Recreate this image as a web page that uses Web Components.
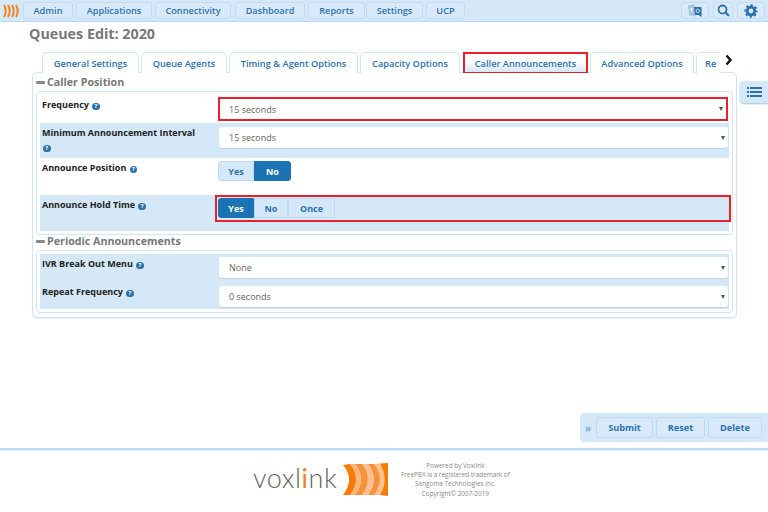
<!DOCTYPE html>
<html><head><meta charset="utf-8"><style>
html,body{margin:0;padding:0;background:#fff}
body{width:768px;height:512px;overflow:hidden;position:relative;font-family:"Open Sans",sans-serif;color:#333}
</style></head><body>
<x-topbar>
  <x-nav style="width:50px">Admin</x-nav><x-nav style="width:76px">Applications</x-nav><x-nav style="width:76px;margin-right:1px">Connectivity</x-nav><x-nav style="width:70px">Dashboard</x-nav><x-nav style="width:57px;margin-right:-2px">Reports</x-nav><x-nav style="width:57px">Settings</x-nav><x-nav style="width:39px">UCP</x-nav>
</x-topbar>
<x-page>
  <x-title>Queues Edit: 2020</x-title>
  <x-tabs>
    <x-tab style="width:97px">General Settings</x-tab>
    <x-tab style="width:86px">Queue Agents</x-tab>
    <x-tab style="width:129px">Timing &amp; Agent Options</x-tab>
    <x-tab style="width:100px">Capacity Options</x-tab>
    <x-tab active style="width:125px;margin-left:1px">Caller Announcements</x-tab>
    <x-tab style="width:104px">Advanced Options</x-tab>
    <x-tab clip style="width:30px">Re</x-tab>
  </x-tabs>
  <x-panel>
    <x-section heading="Caller Position" hh="18" style="height:162px">
      <x-row h="28"><span slot="label">Frequency <x-help></x-help></span><x-select mark top="2">15 seconds</x-select></x-row>
      <x-row h="35" blue><span slot="label">Minimum Announcement Interval<br><x-help style="margin:6px 0 0 1px"></x-help></span><x-select top="4">15 seconds</x-select></x-row>
      <x-row h="37"><span slot="label">Announce Position <x-help></x-help></span><x-radio top="3" on="1" widths="36,37"><span>Yes</span><span>No</span></x-radio></x-row>
      <x-row h="36" blue><span slot="label">Announce Hold Time <x-help></x-help></span><x-radio mark top="3" on="0" widths="36,34,47"><span>Yes</span><span>No</span><span>Once</span></x-radio></x-row>
    </x-section>
    <x-section heading="Periodic Announcements" hh="15" lift style="height:77px">
      <x-row h="28" blue><span slot="label">IVR Break Out Menu <x-help></x-help></span><x-select top="3">None</x-select></x-row>
      <x-row h="27" blue><span slot="label">Repeat Frequency <x-help></x-help></span><x-select top="4">0 seconds</x-select></x-row>
    </x-section>
  </x-panel>
</x-page>
<x-sidetab></x-sidetab>
<x-actionbar><x-act style="width:57px">Submit</x-act><x-act style="width:49px">Reset</x-act><x-act style="width:54px">Delete</x-act></x-actionbar>
<x-footer></x-footer>
<script>
function def(name,html,init){
  customElements.define(name,class extends HTMLElement{
    constructor(){super();this.attachShadow({mode:'open'}).innerHTML=html;}
    connectedCallback(){init&&init.call(this,this.shadowRoot);}
  });
}
def('x-topbar',`<style>
:host{display:flex;align-items:center;height:21px;background:#d5e8f8;border-bottom:1px solid #b6d8f4;box-sizing:content-box;padding:0 3px 0 0}
svg{display:block}
.logo{width:23px;display:flex;justify-content:center;flex:none}
.left{display:flex;gap:3px;flex:1;align-items:center}
.right{display:flex;align-items:center;gap:4px}
.b{height:17px;border:1px solid #c2dcf3;border-radius:3px;box-sizing:border-box;background:#d8eaf9;display:flex;align-items:center;justify-content:center}
</style>
<div class="logo"><svg width="18" height="14" viewBox="0 0 18 14" fill="none" stroke="#f58220" stroke-width="2"><path d="M1 1q3.500 6 0 12M5 1q3.500 6 0 12M9 1q3.500 6 0 12M13 1q3.500 6 0 12"/></svg></div>
<div class="left"><slot></slot></div>
<div class="right">
<div class="b" style="width:28px"><svg width="14" height="14" viewBox="0 0 14 14"><path d="M0 1.500l6.500-1.300 1 12.500-6.500-1.500z" fill="#a9c6df"/><path d="M6 3h7.500v10l-3-2H7z" fill="#2b71ad"/><circle cx="9.800" cy="6.800" r="1.700" fill="none" stroke="#d8eaf9" stroke-width=".9"/><path d="M2 5h3M3.500 4v4" stroke="#fff" stroke-width=".8"/></svg></div>
<div class="b" style="width:20px"><svg width="13" height="13" viewBox="0 0 13 13" fill="none" stroke="#2b71ad" stroke-width="1.800"><circle cx="5.500" cy="5.500" r="4"/><path d="M8.500 8.500l3.500 3.500" stroke-width="2.200"/></svg></div>
<div class="b" style="width:28px"><svg width="14" height="14" viewBox="0 0 14 14" fill="none" stroke="#2b71ad"><circle cx="7" cy="7" r="3.800" stroke-width="2.800"/><circle cx="7" cy="7" r="5.700" stroke-width="2" stroke-dasharray="2.300 2.177" stroke-dashoffset="1.150"/></svg></div>
</div>`);
def('x-nav',`<style>
:host{display:flex;align-items:center;justify-content:center;height:17px;box-sizing:border-box;border:1px solid #c2dcf3;border-radius:3px;background:#d8eaf9;color:#2b71ad;font:600 9.200px "Open Sans",sans-serif;white-space:nowrap}
</style><slot></slot>`);
def('x-page',`<style>:host{display:block;padding:0 31px 0 32px;height:426px;box-sizing:border-box}</style><slot></slot>`);
def('x-title',`<style>:host{display:block;font:700 14.300px/22px "Open Sans",sans-serif;color:#777;margin-left:-3px;padding-top:1px;height:29px}</style><slot></slot>`);
def('x-tabs',`<style>
:host{display:flex;gap:2px;padding-left:10px;height:20px;position:relative;z-index:1;white-space:nowrap}
.arrow{position:absolute;left:692px;top:2px;width:10px;height:12px}
.wrap{display:flex;gap:2px;width:678px;overflow:hidden;height:21px}
</style><div class="wrap"><slot></slot></div>
<svg class="arrow" viewBox="0 0 10 12" fill="none" stroke="#111" stroke-width="2.400"><path d="M2.500 1.500l4 4.500-4 4.500"/></svg>`);
def('x-tab',`<style>
:host{display:flex;flex:none;align-items:center;justify-content:center;height:21px;box-sizing:border-box;border:1px solid #cfe5f7;border-bottom:0;border-radius:5px 5px 0 0;background:#fff;color:#2b71ad;font:600 9.250px "Open Sans",sans-serif;white-space:nowrap}
:host([active]){height:22px;background:linear-gradient(#fff 40%,#d5e8f8);border:2px solid #e8202c;border-radius:0}
:host([clip]){justify-content:flex-start;padding-left:8px;border-right:0}
</style><slot></slot>`);
def('x-panel',`<style>:host{display:block;box-sizing:border-box;height:246px;width:705px;border:1px solid #cfe5f7;border-radius:5px;padding:0 3px;box-shadow:0 1px 1px #e4eff9}</style><slot></slot>`);
def('x-section',`<style>
:host{display:flex;flex-direction:column}
h3{margin:0;flex:none;box-sizing:border-box;display:flex;align-items:center;font:700 10.700px "Open Sans",sans-serif;color:#777}
:host([lift]) h3{padding-bottom:3px}
h3 i{display:inline-block;width:9px;height:3px;border-radius:1px;background:#888;margin-right:2px}
.box{box-sizing:border-box;flex:1;border:1px solid #cfe5f7;border-radius:4px;padding:3px}
</style><h3><i></i><span></span></h3><div class="box"><slot></slot></div>`,function(r){r.querySelector('span').textContent=this.getAttribute('heading');r.querySelector('h3').style.height=this.getAttribute('hh')+'px';});
def('x-row',`<style>
:host{display:grid;grid-template-columns:177px 509px;box-sizing:border-box;font:700 9px/12px "Open Sans",sans-serif;color:#222;padding-left:2px}
:host([blue]){background:#d5e8f8}
.l{padding-top:3.500px;white-space:nowrap}
</style><div class="l"><slot name="label"></slot></div><div><slot></slot></div>`,function(){this.style.height=this.getAttribute('h')+'px';});
def('x-help',`<style>
:host{display:inline-block;width:7.500px;height:7.500px;border-radius:50%;background:#2b71ad;color:#fff;font:700 6px/7.500px "Open Sans",sans-serif;text-align:center;margin-left:1px;vertical-align:0}
</style>?`);
def('x-select',`<style>
:host{display:flex;align-items:center;justify-content:space-between;box-sizing:border-box;height:21px;background:#fff;border-radius:3px;padding:0 3px 0 10px;font:400 9px "Open Sans",sans-serif;color:#666;position:relative;box-shadow:0 1px 1px #bcd3e6}
:host([mark]){height:24px;border:2px solid #e8202c;border-radius:0;box-shadow:none;margin-left:-1px;padding-left:9px}
i{width:0;height:0;border:2px solid transparent;border-top:4px solid #555;border-bottom:0}
</style><slot></slot><i></i>`,function(){this.style.marginTop=this.getAttribute('top')+'px';});
def('x-radio',`<style>
:host{display:flex;height:20px;position:relative;width:max-content;margin-left:-1px}
::slotted(span){display:flex;align-items:center;justify-content:center;box-sizing:border-box;border:1px solid #bcdaf3;font:700 9px "Open Sans",sans-serif;color:#2b71ad;background:#d5e8f8}
::slotted(span.on){background:#1b73b3;color:#fff;border-color:#1b73b3}
.m{display:none;position:absolute;left:-3px;top:-3px;height:27px;width:516px;box-sizing:border-box;border:2px solid #e8202c}
:host([mark]) .m{display:block}
</style><slot></slot><div class="m"></div>`,function(){
  this.style.marginTop=this.getAttribute('top')+'px';
  const w=this.getAttribute('widths').split(','),on=+this.getAttribute('on');
  [...this.children].forEach((s,i)=>{s.style.width=w[i]+'px';if(i==on)s.className='on';
    if(i==0)s.style.borderRadius='3px 0 0 3px';if(i==w.length-1)s.style.borderRadius='0 3px 3px 0';});
});
def('x-sidetab',`<style>
:host{position:absolute;left:740px;top:81px;width:28px;height:22px;background:#d5e8f8;border-radius:4px 0 0 4px;box-shadow:0 1px 2px #9fbcd5;display:flex;align-items:center;justify-content:center}
</style><svg width="15" height="12" viewBox="0 0 15 12" fill="#2b71ad"><path d="M0 1h2v2H0zM3 1h12v2H3zM0 5h2v2H0zM3 5h12v2H3zM0 9h2v2H0zM3 9h12v2H3z"/></svg>`);
def('x-actionbar',`<style>
:host{position:absolute;left:580px;top:413px;width:188px;height:29px;box-sizing:border-box;background:#d5e8f8;border-radius:4px 0 0 4px;display:flex;align-items:center;gap:3px;padding-left:5px}
.c{width:7px;margin-right:1px;color:#7da7cc;font:700 10px "Open Sans",sans-serif}
</style><span class="c">»</span><slot></slot>`);
def('x-act',`<style>
:host{display:flex;align-items:center;justify-content:center;height:21px;box-sizing:border-box;border:1px solid #bcdaf3;border-radius:3px;background:#d8eaf9;color:#2b71ad;font:700 9.200px "Open Sans",sans-serif}
</style><slot></slot>`);
def('x-footer',`<style>
:host{display:flex;box-sizing:border-box;height:64px;border-top:2px solid #bcdcf6;box-shadow:inset 0 1px 0 #e3f0fb;background:#fff;padding-left:253px}
.v{font:300 27px/30px Lato,"Open Sans",sans-serif;color:#666;margin-top:13px;letter-spacing:.55px;white-space:nowrap}
.v b{font-weight:400;color:#f58220}
svg{margin:13px 0 0 5px;flex:none}
.t{font:400 6.400px/9.200px "Open Sans",sans-serif;color:#888;text-align:center;margin:11px 0 0 12px;width:110px;white-space:nowrap}
</style><div class="v">voxl<b>i</b>nk</div>
<svg width="46" height="33" viewBox="0 0 46 33">
<path d="M8 1L13 1Q25 16 13 32L8 32Q20 16 8 1z" fill="#fbb57f"/>
<path d="M20 1L26 1Q38 16 26 32L20 32Q32 16 20 1z" fill="#fcc193"/>
<path d="M32 1L38 .5Q47 16 38 32L32 32Q44 16 32 1z" fill="#fcc193"/>
<path d="M1 2L8 1Q20 16 8 32L1 32Q13 16 1 2z" fill="#f57c00"/>
<path d="M13 1L20 1Q32 16 20 32L13 32Q25 16 13 1z" fill="#f8923a"/>
<path d="M26 1L32 1Q44 16 32 32L26 32Q38 16 26 1z" fill="#f8923a"/>
<path d="M38 .5L46 0V33L38 32Q47 16 38 .5z" fill="#f57c00"/></svg>
<div class="t">Powered by Voxlink<br>FreePBX is a registered trademark of<br>Sangoma Technologies Inc.<br>Copyright© 2007-2019</div>`);
</script>
</body></html>
